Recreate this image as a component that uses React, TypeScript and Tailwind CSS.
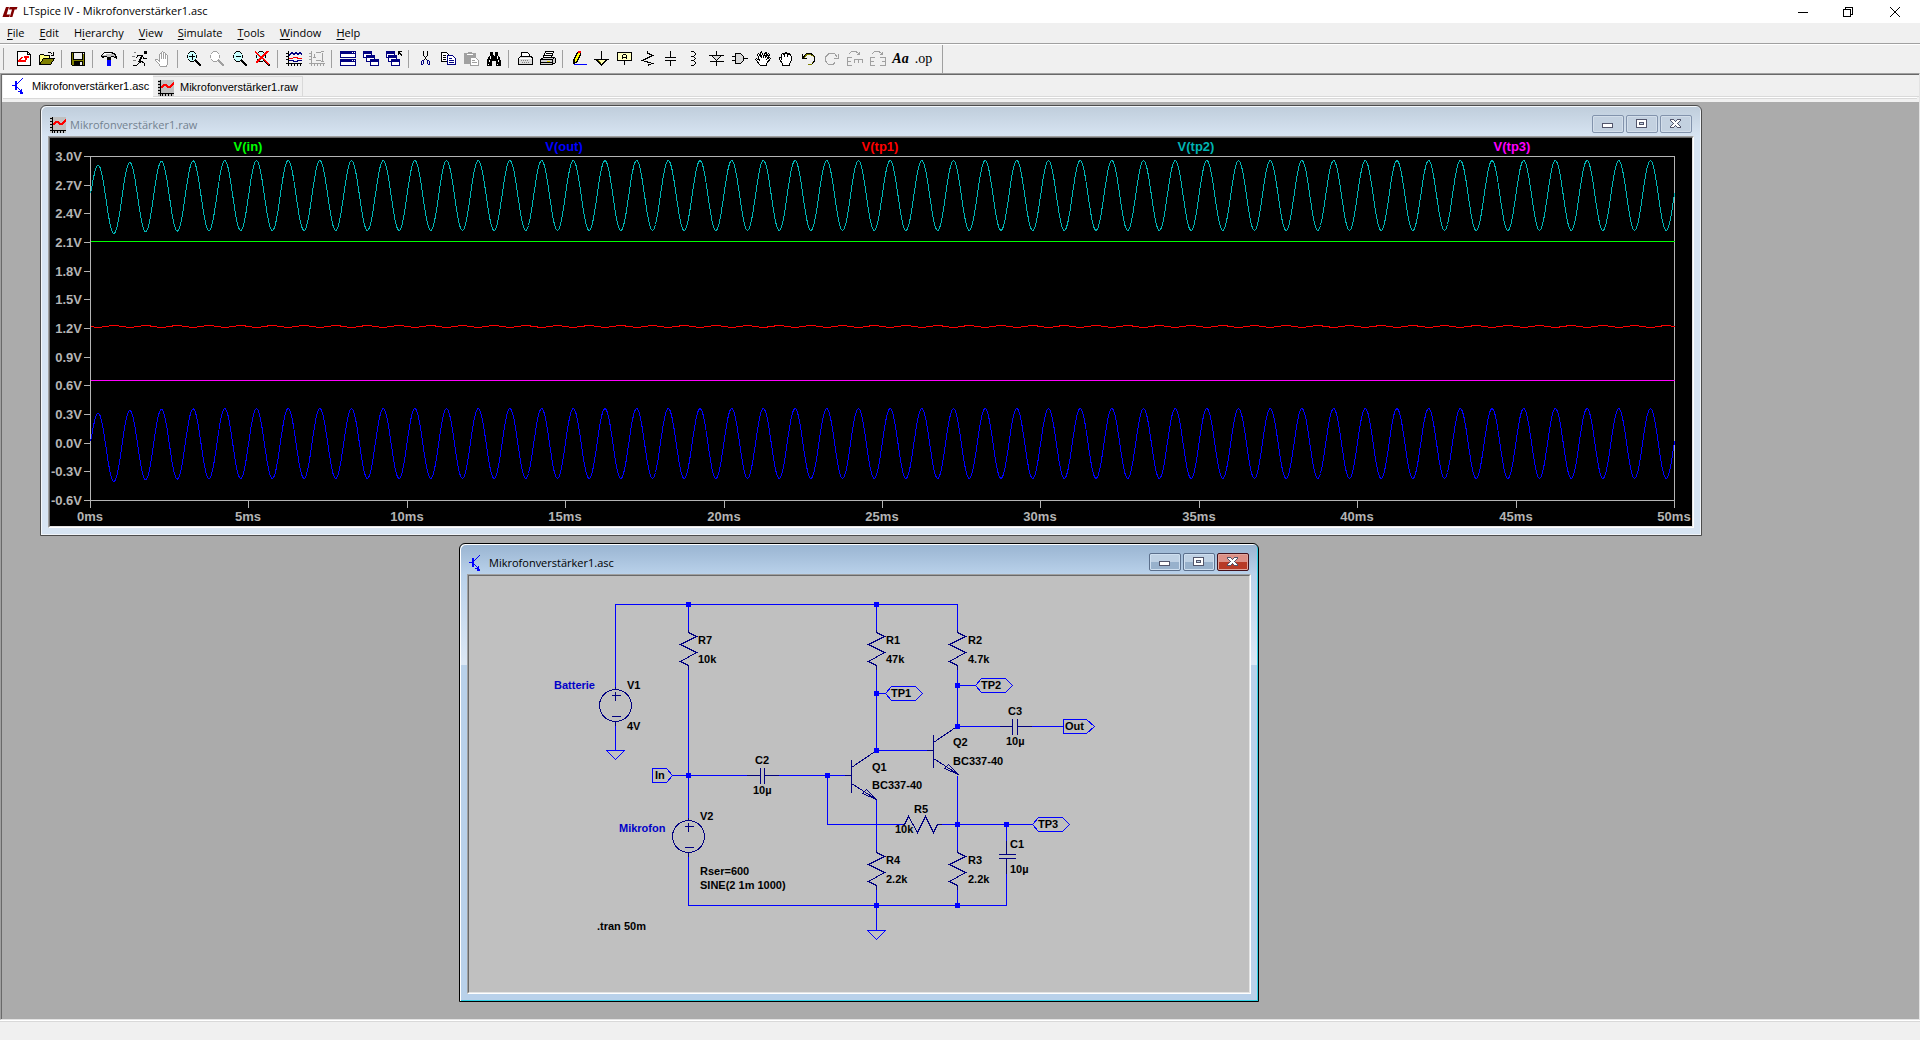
import type { ReactNode } from "react";
import clsx from "clsx";

const UI_FONT = "font-['Open_Sans','Noto_Sans',sans-serif]";
const SANS_FONT = "font-['Liberation_Sans',Arial,sans-serif]";

/* ---------- Icons ---------- */

function Icon({ children, size = 16 }: { children: ReactNode; size?: number }) {
  return (
    <svg width={size} height={size} viewBox="0 0 16 16" fill="none" stroke="#000" shapeRendering="crispEdges" className="shrink-0">
      {children}
    </svg>
  );
}

function LogoIcon() {
  return (
    <svg width="16" height="16" viewBox="0 0 16 16" fill="#800000" className="shrink-0">
      <path d="M4 3H7L4.6 10.5H8L7.3 13H0.5L1.3 10.5Z" />
      <path d="M7.6 3H15.5L14.6 5.6H12.6L10.4 13H7.8L10 5.6H7Z" />
    </svg>
  );
}

function TransistorIcon() {
  return (
    <Icon>
      <path d="M0 7.5H4M10.5 0.5L5 6M5 9L9 13" stroke="#0000ff" />
      <path d="M4 3V12" stroke="#0000ff" strokeWidth="2" />
      <path d="M6 13H9V11H10V14H11V16H8V14H6Z" fill="#0000ff" stroke="none" />
    </Icon>
  );
}

function WaveIcon() {
  return (
    <Icon>
      <rect width="16" height="16" fill="#c0c0c0" stroke="none" />
      <path d="M2.5 0V16M0 13.5H16M0 1.5H2M0 4.5H2M0 7.5H2M0 10.5H2M4.5 14V16M7.5 14V16M10.5 14V16M13.5 14V16" />
      <path d="M3 8L6 5H8L10 7H12L16 3" stroke="#ff0000" strokeWidth="1.6" />
    </Icon>
  );
}

const lens = "M4 0.5H8M9.5 2V3M10.5 4V7M9.5 8V9M8 10.5H4M2.5 9V8M1.5 7V4M2.5 3V2M3 1.5H4M8 1.5H9M3 9.5H4M8 9.5H9";

function Lens({ color = "#000", glass = "#c8ffff", children }: { color?: string; glass?: string; children?: ReactNode }) {
  return (
    <Icon>
      <path d="M4 1H8L10 4V7L8 10H4L2 7V4Z" fill={glass} stroke="none" />
      <path d={lens} stroke={color} />
      <path d="M9 9L15 15" stroke={color} strokeWidth="2" />
      {children}
    </Icon>
  );
}

function Window16({ x, y }: { x: number; y: number }) {
  return (
    <g>
      <rect x={x + 0.5} y={y + 0.5} width="8" height="6" fill="#fff" stroke="#000080" />
      <path d={`M${x} ${y + 1}h9v2h-9z`} fill="#000080" stroke="none" />
    </g>
  );
}

function Hand({ color }: { color: string }) {
  return (
    <Icon>
      <path
        d="M5.5 15.5L3.5 12.5L0.5 9.5V8.5H2.5L4.5 10.5V3.5L5.5 2.5L6.5 3.5V1.5L7.5 0.5L8.5 1.5V2.5L9.5 1.5L10.5 2.5V4.5L11.5 3.5L12.5 4.5V12.5L11.5 15.5ZM6.5 3.5V8M8.5 2.5V8M10.5 4.5V8"
        fill="#fff"
        stroke={color}
      />
    </Icon>
  );
}

const toolGroups: { label: string; icon: ReactNode }[][] = [
  [
    {
      label: "New schematic",
      icon: (
        <Icon>
          <path d="M1.5 0.5H11.5L14.5 3.5V14.5H1.5ZM11.5 0.5V3.5H14.5" fill="#fff" />
          <path d="M5 6H7L5 9H8V11H2V10ZM8 5H13V7H11L10 11H8L9 7H8Z" fill="#ff0000" stroke="none" />
        </Icon>
      ),
    },
    {
      label: "Open",
      icon: (
        <Icon>
          <path d="M0.5 13.5V4.5L1.5 3.5H4.5L5.5 4.5H10.5V7.5" fill="#ffff80" />
          <path d="M0.5 13.5L4.5 7.5H15.5L11.5 13.5Z" fill="#808000" />
          <path d="M8.5 2.5L9.5 1.5H11.5L13.5 3.5M14.5 1V4M12 4.5H15" />
        </Icon>
      ),
    },
  ],
  [
    {
      label: "Save",
      icon: (
        <Icon>
          <path d="M1.5 1.5H14.5V14.5H2.5L1.5 13.5Z" fill="#808000" />
          <path d="M4 2H12V8H4Z" fill="#efefef" stroke="none" />
          <path d="M4 10H13V15H4Z" fill="#000" stroke="none" />
          <path d="M10 11H12V14H10ZM13 2H14V3H13Z" fill="#efefef" stroke="none" />
          <path d="M3.5 2V8.5H12.5V2" />
        </Icon>
      ),
    },
  ],
  [
    {
      label: "Control panel",
      icon: (
        <Icon>
          <path d="M0.5 4.5L3.5 1.5H10.5L14.5 3.5L15.5 7.5L12.5 5.5H10.5L9.5 6.5H6.5L5.5 5.5H3.5L1.5 6.5Z" fill="#c0c0c0" />
          <path d="M3 2.5H10M2 3.5H5" stroke="#fff" />
          <path d="M6 7H10V15H6Z" fill="#0000ff" stroke="none" />
          <path d="M6 7H10V9H6Z" fill="#000" stroke="none" />
        </Icon>
      ),
    },
  ],
  [
    {
      label: "Run",
      icon: (
        <Icon>
          <path d="M12 0H15V3H12Z" fill="#000" stroke="none" />
          <path d="M6 4.5H10L12 7.5H15M6.5 4L4 7M8 11L5 14H1M9 10L12 12V15" />
          <path d="M10.5 4L7.5 10L9 11" strokeWidth="2" />
          <path d="M2 1.5H4M0 5.5H3M1 9.5H4" stroke="#808080" />
        </Icon>
      ),
    },
    { label: "Halt", icon: <Hand color="#a0a0a0" /> },
  ],
  [
    {
      label: "Zoom in",
      icon: (
        <Lens>
          <path d="M3 5.5H9M6.5 3V9" />
        </Lens>
      ),
    },
    { label: "Pan", icon: <Lens color="#a0a0a0" glass="#fff" /> },
    {
      label: "Zoom out",
      icon: (
        <Lens>
          <path d="M4 5.5H9" />
        </Lens>
      ),
    },
    {
      label: "Zoom full extents",
      icon: (
        <Lens>
          <path d="M0 1L14 13M13 0L1 12" stroke="#ff0000" strokeWidth="1.5" />
        </Lens>
      ),
    },
  ],
  [
    {
      label: "Autorange",
      icon: (
        <Icon>
          <path d="M2.5 0V15M0 12.5H16M0 2.5H2M0 5.5H2M0 8.5H2M5.5 13V15M8.5 13V15M11.5 13V15M14.5 13V15" />
          <path d="M3 4.5L6 1.5L8 3.5L10 1.5L12 3.5L14 1.5L16 3.5" stroke="#000080" />
          <path d="M3 7.5H6L8 6.5H11L12 7.5H16" stroke="#ff0000" />
          <path d="M3 9.5H7L8 10.5H11L12 9.5H16" stroke="#000080" />
        </Icon>
      ),
    },
    {
      label: "FFT",
      icon: (
        <Icon>
          <path d="M2.5 0V15M0 12.5H16M0 2.5H2M0 5.5H2M0 8.5H2M5.5 13V15M8.5 13V15M11.5 13V15M14.5 13V15M7 1.5H12M5.5 3V7M7 9.5H12M13.5 2V10M12 0.5H15M12 10.5H15M4 6.5H7" stroke="#a0a0a0" />
        </Icon>
      ),
    },
  ],
  [
    {
      label: "Tile windows",
      icon: (
        <Icon>
          <path d="M0.5 0.5H15.5V6.5H0.5ZM0.5 8.5H15.5V14.5H0.5Z" fill="#fff" stroke="#000080" />
          <path d="M0 0H16V3H0ZM0 8H16V11H0Z" fill="#000080" stroke="none" />
          <path d="M12 1.5H13M14 1.5H15M12 9.5H13M14 9.5H15" stroke="#fff" />
        </Icon>
      ),
    },
    {
      label: "Cascade windows",
      icon: (
        <Icon>
          <Window16 x={0} y={0} />
          <Window16 x={3} y={4} />
          <Window16 x={7} y={8} />
        </Icon>
      ),
    },
    {
      label: "Close all windows",
      icon: (
        <Icon>
          <Window16 x={0} y={0} />
          <Window16 x={2} y={4} />
          <Window16 x={5} y={8} />
          <path d="M12 0.5H16M12.5 0V4M13 1L16 5" />
        </Icon>
      ),
    },
  ],
  [
    {
      label: "Cut",
      icon: (
        <Icon>
          <path d="M6.5 0V4L10.5 10M10.5 0V4L6.5 10" />
          <path d="M5.5 9.5H6.5V12.5L5.5 13.5H4.5V10.5ZM10.5 9.5H11.5L12.5 10.5V13.5H11.5L10.5 12.5Z" stroke="#000080" />
        </Icon>
      ),
    },
    {
      label: "Copy",
      icon: (
        <Icon>
          <path d="M1.5 1.5H6.5L9.5 4.5V10.5H1.5Z" fill="#fff" />
          <path d="M7.5 4.5H12.5L15.5 7.5V13.5H7.5Z" fill="#fff" stroke="#000080" />
          <path d="M3 4.5H6M3 6.5H6M3 8.5H6" />
          <path d="M9 7.5H12M9 9.5H14M9 11.5H14" stroke="#000080" />
        </Icon>
      ),
    },
    {
      label: "Paste",
      icon: (
        <Icon>
          <path d="M1 2H5V1H9V2H13V13H1Z" fill="#a0a0a0" stroke="none" />
          <path d="M4 3.5H10" stroke="#fff" />
          <path d="M7.5 6.5H12.5L15.5 9.5V14.5H7.5Z" fill="#fff" stroke="#a0a0a0" />
          <path d="M9 9.5H12M9 11.5H14" stroke="#a0a0a0" />
        </Icon>
      ),
    },
    {
      label: "Find",
      icon: (
        <Icon>
          <path d="M4 1H7V4L8 5L9 4V1H12V4L14 7L15 10V15H10V10H6V15H1V10L2 7L4 4Z" fill="#000" stroke="none" />
          <path d="M4.5 5V8M3.5 9V11M11.5 5V8M12.5 9V11M2 13.5H3M11 13.5H12" stroke="#fff" />
        </Icon>
      ),
    },
  ],
  [
    {
      label: "Print setup",
      icon: (
        <Icon>
          <path d="M4.5 5V1.5H10.5L12.5 3.5V5" fill="#fff" />
          <path d="M3.5 5.5H14.5L15.5 7.5V13.5H1.5V7.5Z" fill="#dcdcdc" />
          <path d="M2 7.5H15" stroke="#fff" />
          <path d="M4 9.5H12M5 11.5H13" stroke="#808080" strokeDasharray="1 1" />
        </Icon>
      ),
    },
    {
      label: "Print",
      icon: (
        <Icon>
          <path d="M3.5 6L5.5 0.5H13.5L11.5 6" fill="#fff" />
          <path d="M0.5 8.5L3.5 6.5H14.5L15.5 7.5V11.5L12.5 13.5H0.5Z" fill="#d0d0d0" />
          <path d="M6 2.5H12M5 4.5H11M1 8.5H12.5V13M12.5 8.5L14.5 6.5M1 11.5H12" />
          <path d="M7 10.5H10" stroke="#e0d000" />
        </Icon>
      ),
    },
  ],
  [
    {
      label: "Wire",
      icon: (
        <Icon>
          <path d="M2.5 12.5V9.5L6.5 1.5H9.5V3.5L5.5 11.5Z" fill="#ffff00" />
          <path d="M7 0H10V2H7Z" fill="#ff0000" stroke="none" />
          <path d="M2 9H4V11H5V12L2 13Z" fill="#000" stroke="none" />
          <path d="M3 13.5H16" stroke="#0000ff" />
        </Icon>
      ),
    },
    {
      label: "Ground",
      icon: (
        <Icon>
          <path d="M3 8H13L8 14Z" fill="#ffffb0" stroke="#808000" />
          <path d="M7.5 0V8M0 8.5H15M2 8.5L7.5 14L13 8.5" />
        </Icon>
      ),
    },
    {
      label: "Label net",
      icon: (
        <Icon>
          <path d="M0.5 1.5H14.5V9.5H0.5Z" fill="#ffffc0" />
          <path d="M7.5 10V14M5.5 8V4.5L6.5 3.5H8.5L9.5 4.5V8M6 6.5H9" />
        </Icon>
      ),
    },
    { label: "Resistor", icon: <Icon><path d="M7.5 0V2L12.5 4.5L2.5 9.5L12.5 12.5L8.5 14V15" /></Icon> },
    { label: "Capacitor", icon: <Icon><path d="M7.5 0V6M7.5 9V15M2 6.5H13M2 9.5H13" /></Icon> },
    { label: "Inductor", icon: <Icon><path d="M5 0.5H7.5L9.5 2.5V3.5L7.5 5.5H5M7.5 5.5L9.5 7.5L7.5 9.5H5M7.5 9.5L9.5 11.5V12.5L7.5 14.5H5" /></Icon> },
    {
      label: "Diode",
      icon: (
        <Icon>
          <path d="M2.5 4.5H12.5L7.5 9.5Z" fill="#d8d8d8" />
          <path d="M7.5 0V4M7.5 10V15M0 4.5H15M1 10.5H15" />
        </Icon>
      ),
    },
    {
      label: "Component",
      icon: (
        <Icon>
          <path d="M3.5 2.5H8.5L11.5 5.5V9.5L8.5 12.5H3.5Z" fill="#d8d8d8" />
          <path d="M0 5.5H3M0 9.5H3M12 7.5H16" />
        </Icon>
      ),
    },
    {
      label: "Move",
      icon: (
        <Icon>
          <path d="M5.5 14.5L0.5 8.5L1.5 7.5L4.5 9.5L2.5 3.5L3.5 2.5L6.5 6.5L5.5 1.5L6.5 0.5L8.5 5.5L10.5 1.5H11.5L10.5 6.5L13.5 2.5L14.5 3.5L12.5 7.5L14.5 6.5L15.5 7.5L11.5 12.5V14.5Z" fill="#fff" />
        </Icon>
      ),
    },
    {
      label: "Drag",
      icon: (
        <Icon>
          <path d="M4.5 14.5V12.5L1.5 8.5V6.5H3.5V3.5L4.5 2.5L6.5 3.5V2.5L8.5 1.5L9.5 3.5L11.5 2.5L12.5 4.5L13.5 5.5V9.5L11.5 12.5V14.5ZM6.5 4V6M9.5 4V6M3.5 7V9" fill="#fff" />
        </Icon>
      ),
    },
    {
      label: "Undo",
      icon: (
        <Icon>
          <path d="M3 6.5L6 3.5H10L13.5 6.5V9.5L10.5 13.5H7" stroke="#808000" />
          <path d="M1.5 3V8M1 7.5H6M2 6.5L5.5 2.5H10L13.5 5.5V10L10.5 13.5" />
        </Icon>
      ),
    },
    {
      label: "Redo",
      icon: (
        <Icon>
          <path d="M14.5 3V7.5H10M13 6L10.5 2.5H5L1.5 6V10L4.5 13.5H9L11 11.5" stroke="#a0a0a0" />
        </Icon>
      ),
    },
    {
      label: "Rotate",
      icon: (
        <Icon>
          <path d="M2 2.5L5 0.5H9L12.5 3.5M12.5 1V4M10 3.5H13M5 6.5H0.5V14.5H5M1 10.5H4M7.5 12V8.5H15.5V12M11.5 9V12" stroke="#a0a0a0" />
        </Icon>
      ),
    },
    {
      label: "Mirror",
      icon: (
        <Icon>
          <path d="M2 2.5L5 0.5H9L12.5 3.5M12.5 1V4M10 3.5H13M5 6.5H0.5V14.5H5M1 10.5H4M10 6.5H15.5V14.5H10M12 10.5H15" stroke="#a0a0a0" />
        </Icon>
      ),
    },
    { label: "Text", icon: <span className="font-['Liberation_Serif',serif] text-sm font-bold italic">Aa</span> },
    { label: "SPICE directive", icon: <span className="font-['Liberation_Serif',serif] text-sm">.op</span> },
  ],
];

/* ---------- Application bars ---------- */

function TitleBar() {
  return (
    <header className="flex h-[23px] items-center gap-[5px] bg-white pl-0.5">
      <LogoIcon />
      <h1 className={clsx(UI_FONT, "text-[11px]")}>LTspice IV - Mikrofonverstärker1.asc</h1>
      <div className="ml-auto flex">
        <button type="button" aria-label="Minimize" className="grid h-5 w-[45px] place-items-center">
          <svg width="10" height="10" viewBox="0 0 10 10" stroke="#000" shapeRendering="crispEdges">
            <path d="M0 5.5H10" />
          </svg>
        </button>
        <button type="button" aria-label="Restore" className="grid h-5 w-[45px] place-items-center">
          <svg width="10" height="10" viewBox="0 0 10 10" fill="none" stroke="#000" shapeRendering="crispEdges">
            <path d="M0.5 2.5H7.5V9.5H0.5ZM2.5 2V0.5H9.5V7.5H8" />
          </svg>
        </button>
        <button type="button" aria-label="Close" className="grid h-5 w-[50px] place-items-center">
          <svg width="10" height="10" viewBox="0 0 10 10" stroke="#000">
            <path d="M0 0L10 10M10 0L0 10" />
          </svg>
        </button>
      </div>
    </header>
  );
}

const menuItems = [
  ["", "F", "ile"],
  ["", "E", "dit"],
  ["H", "i", "erarchy"],
  ["", "V", "iew"],
  ["", "S", "imulate"],
  ["", "T", "ools"],
  ["", "W", "indow"],
  ["", "H", "elp"],
];

function MenuBar() {
  return (
    <nav className={clsx(UI_FONT, "flex h-[21px] items-center gap-[15px] border-b border-[#a0a0a0] bg-[#f0f0f0] pl-[7px] text-[11px]")}>
      {menuItems.map(([before, key, after]) => (
        <button type="button" key={key + after}>
          {before}
          <span className="underline underline-offset-2">{key}</span>
          {after}
        </button>
      ))}
    </nav>
  );
}

function Toolbar() {
  return (
    <div className="flex h-[29px] border-t border-white bg-[#f0f0f0]">
      <div className="flex items-center border-r border-[#a0a0a0] pr-[7px] pl-[3px]">
        <span className="mr-2 h-[22px] w-px bg-[#a0a0a0]" />
        {toolGroups.map((group, i) => (
          <div key={i} className="flex items-center">
            {i > 0 && <span className="mr-1 ml-[3px] h-[18px] w-px bg-[#a0a0a0]" />}
            {group.map((tool) => (
              <button type="button" key={tool.label} aria-label={tool.label} className="grid h-[22px] w-[23px] place-items-center">
                {tool.icon}
              </button>
            ))}
          </div>
        ))}
      </div>
    </div>
  );
}

function Tabs() {
  return (
    <div className="h-[27px] bg-[#f0f0f0] pl-px">
      <div className={clsx(SANS_FONT, "flex h-[22px] items-end border-b border-[#d9d9d9] text-[11px]")}>
        <button type="button" className="-mb-px flex h-[22px] w-[150px] items-center gap-1 bg-white pl-[9px]">
          <TransistorIcon />
          Mikrofonverstärker1.asc
        </button>
        <button type="button" className="flex h-5 items-center gap-1.5 border-t border-r border-[#d9d9d9] pt-0.5 pr-1 pl-[5px]">
          <WaveIcon />
          Mikrofonverstärker1.raw
        </button>
      </div>
      <div className="mr-0.5 h-0.5 border-b border-[#d9d9d9] bg-white" />
    </div>
  );
}

/* ---------- MDI child windows ---------- */

function CaptionButton({ label, active, danger, children }: { label: string; active: boolean; danger?: boolean; children: ReactNode }) {
  return (
    <button
      type="button"
      aria-label={label}
      className={clsx(
        "grid h-[18px] w-8 place-items-center rounded-xs border",
        !active && "border-[#8293ac] bg-[#c3d1e0] inset-ring inset-ring-[#d3deea]",
        active && !danger && "border-[#5b6f8c] bg-linear-to-b from-[#bfd1e4] from-50% to-[#98b1cc] to-50% inset-ring inset-ring-[#cfdff0]",
        active && danger && "border-[#43101a] bg-linear-to-b from-[#dd9086] from-50% to-[#b83a26] to-50% inset-ring inset-ring-[#e0a59c]",
      )}
    >
      <svg width="12" height="10" viewBox="0 0 12 10" fill="#fff" stroke="#52556b" shapeRendering="crispEdges">
        {children}
      </svg>
    </button>
  );
}

function ChildWindow({ title, icon, active = false, className, children }: { title: string; icon: ReactNode; active?: boolean; className: string; children: ReactNode }) {
  return (
    <section
      className={clsx(
        "absolute flex flex-col rounded-t-md border px-[7px] pb-[7px]",
        active
          ? "border-black bg-[linear-gradient(#99b4d1_0,#b9d1ea_30px,#dde8f5_121px,#b9d1ea_121px)] shadow-[inset_1px_1px_#fff,inset_-1px_-1px_#2fd0e4]"
          : "border-[#4c4c4c] bg-[linear-gradient(#bfcddb_0,#d7e4f2_30px)] shadow-[inset_1px_1px_#f4f8fc,inset_-1px_-1px_#f0f4f9]",
        className,
      )}
    >
      <div className="flex h-[30px] shrink-0 items-center gap-1 pt-2 pr-0.5 pl-0.5">
        {icon}
        <h2 className={clsx(UI_FONT, "text-[11px]", active ? "text-black" : "text-[#738290]")}>{title}</h2>
        <div className="mb-0.5 ml-auto flex gap-0.5">
          <CaptionButton label="Minimize" active={active}>
            <path d="M0.5 4.5H10.5V8.5H0.5Z" />
          </CaptionButton>
          <CaptionButton label="Maximize" active={active}>
            <path d="M0.5 0.5H10.5V8.5H0.5ZM3.5 3.5H7.5V5.5H3.5Z" fillRule="evenodd" />
          </CaptionButton>
          <CaptionButton label="Close" active={active} danger>
            <path d="M0.5 0.5H3.5L5.5 2.5L7.5 0.5H10.5V1.5L7.5 4.5L10.5 7.5V8.5H7.5L5.5 6.5L3.5 8.5H0.5V7.5L3.5 4.5L0.5 1.5Z" />
          </CaptionButton>
        </div>
      </div>
      <div className="flex min-h-0 flex-1 border border-t-[#a0a0a0] border-r-white border-b-white border-l-[#a0a0a0]">
        <div className="min-w-0 flex-1 border border-t-[#696969] border-r-[#e3e3e3] border-b-[#e3e3e3] border-l-[#696969]">{children}</div>
      </div>
    </section>
  );
}

/* ---------- Waveform plot ---------- */

const PLOT = { left: 90, right: 1674, top: 156, bottom: 500 };
const PX_PER_MS = (PLOT.right - PLOT.left) / 50;

const traces = [
  { name: "V(in)", color: "#00ff00" },
  { name: "V(out)", color: "#0000ff" },
  { name: "V(tp1)", color: "#ff0000" },
  { name: "V(tp2)", color: "#00b4b4" },
  { name: "V(tp3)", color: "#ff00ff" },
];

const voltLabels = ["3.0V", "2.7V", "2.4V", "2.1V", "1.8V", "1.5V", "1.2V", "0.9V", "0.6V", "0.3V", "0.0V", "-0.3V", "-0.6V"];

// 1 kHz sine with a start-up offset that settles within a few milliseconds
function sine(center: number, amplitude: number, settle: number) {
  const points: string[] = [];
  for (let x = 0; x <= PLOT.right - PLOT.left; x++) {
    const ms = x / PX_PER_MS;
    const offset = settle * Math.exp(-ms / 1.1) * (1 - Math.exp(-ms / 0.08));
    const y = center - amplitude * Math.sin(2 * Math.PI * (ms + 0.01)) + offset;
    points.push(`${PLOT.left + x},${y.toFixed(1)}`);
  }
  return points.join(" ");
}

function Plot() {
  const { left, right, top, bottom } = PLOT;
  return (
    <svg viewBox="50 138 1642 388" className="block size-full bg-black" shapeRendering="crispEdges">
      <g className={SANS_FONT} fontSize="13" fontWeight="bold" textAnchor="middle">
        {traces.map((trace, i) => (
          <text key={trace.name} x={248 + i * 316} y="151" fill={trace.color}>
            {trace.name}
          </text>
        ))}
        {voltLabels.map((label, i) => (
          <text key={label} x="82" y={161 + Math.round((i * (bottom - top)) / 12)} fill="#b4b4b4" textAnchor="end">
            {label}
          </text>
        ))}
        {Array.from({ length: 11 }, (_, i) => (
          <text key={i} x={Math.round(left + i * 5 * PX_PER_MS)} y="521" fill="#b4b4b4">
            {i * 5}ms
          </text>
        ))}
      </g>
      <g transform="translate(0.5 0.5)" fill="none">
        <path d={`M${left} ${top}H${right}V${bottom}H${left}Z`} stroke="#b4b4b4" />
        {voltLabels.map((label, i) => {
          const y = top + Math.round((i * (bottom - top)) / 12);
          return <path key={label} d={`M83 ${y}H${left}`} stroke="#b4b4b4" />;
        })}
        {Array.from({ length: 11 }, (_, i) => (
          <path key={i} d={`M${Math.round(left + i * 5 * PX_PER_MS)} ${bottom}V507`} stroke="#b4b4b4" />
        ))}
        <path d={`M${left} 241H${right}`} stroke="#00ff00" />
        <polyline points={sine(326, -0.8, 0)} stroke="#ff0000" />
        <path d={`M${left} 380H${right}`} stroke="#ff00ff" />
        <polyline points={sine(195, 35, 6)} stroke="#00b4b4" />
        <polyline points={sine(443, 35, 6)} stroke="#0000ff" />
      </g>
    </svg>
  );
}

/* ---------- Schematic ---------- */

const WIRE = "#0000ff";
const PART = "#000080";

function Resistor({ x, y }: { x: number; y: number }) {
  return <path d={`M${x} ${y - 3}v3l8 4l-16 8l16 8l-16 9l8 4v4`} stroke={PART} />;
}

function Source({ x, y }: { x: number; y: number }) {
  return (
    <g stroke={PART}>
      <circle cx={x} cy={y} r="16" />
      <path d={`M${x} ${y - 19}v3M${x} ${y + 16}v4M${x - 4} ${y - 10}h9M${x} ${y - 14}v9M${x - 4} ${y + 11}h9`} />
    </g>
  );
}

function Transistor({ x, y }: { x: number; y: number }) {
  return <path d={`M${x - 7} ${y}h7M${x} ${y - 16}v33M${x} ${y - 8}l25 -17M${x} ${y + 8}l25 16l-10 -10l-4 4l14 6`} stroke={PART} />;
}

function Ground({ x, y }: { x: number; y: number }) {
  return <path d={`M${x - 9} ${y}h18l-9 9z`} stroke={WIRE} />;
}

function TestPoint({ x, y }: { x: number; y: number }) {
  return <path d={`M${x} ${y}l6 -7h24l7 7l-7 7h-24z`} stroke={WIRE} />;
}

const nodes = [
  [688, 604], [876, 604], [876, 693], [957, 685], [957, 726], [876, 750], [688, 775],
  [827, 775], [957, 824], [1006, 824], [876, 905], [957, 905],
];

const partLabels: [number, number, string][] = [
  [698, 644, "R7"], [698, 663, "10k"],
  [886, 644, "R1"], [886, 663, "47k"],
  [968, 644, "R2"], [968, 663, "4.7k"],
  [627, 689, "V1"], [627, 730, "4V"],
  [755, 764, "C2"], [753, 794, "10µ"],
  [1008, 715, "C3"], [1006, 745, "10µ"],
  [872, 771, "Q1"], [872, 789, "BC337-40"],
  [953, 746, "Q2"], [953, 765, "BC337-40"],
  [914, 813, "R5"], [895, 833, "10k"],
  [886, 864, "R4"], [886, 883, "2.2k"],
  [968, 864, "R3"], [968, 883, "2.2k"],
  [1010, 848, "C1"], [1010, 873, "10µ"],
  [700, 820, "V2"], [700, 875, "Rser=600"], [700, 889, "SINE(2 1m 1000)"],
  [655, 779, "In"], [1065, 730, "Out"],
  [891, 697, "TP1"], [981, 689, "TP2"], [1038, 828, "TP3"],
  [597, 930, ".tran 50m"],
];

function Schematic() {
  return (
    <svg viewBox="469 576 780 416" className="block size-full bg-[#c0c0c0]" shapeRendering="crispEdges">
      <g transform="translate(0.5 0.5)" fill="none">
        <g stroke={WIRE}>
          <path d="M615 686V604H957V629M688 604V629M876 604V629M688 669V817M876 669V750H926M957 669V726H999" />
          <path d="M615 725V750M672 775H746M778 775H844M827 775V824H902M876 693H885M957 685H975M1031 726H1063" />
          <path d="M876 799V849M957 775V849M941 824H1032M1006 824V840M1006 873V905H688V856M876 889V930M957 889V905" />
          <path d="M652 768H666L672 775L666 782H652ZM1063 719H1086L1094 726L1086 733H1063Z" />
        </g>
        <Resistor x={688} y={632} />
        <Resistor x={876} y={632} />
        <Resistor x={957} y={632} />
        <Resistor x={876} y={852} />
        <Resistor x={957} y={852} />
        <path d="M902 824H904L908 816L917 832L925 816L933 832L937 824H941" stroke={PART} />
        <path d="M746 775H760M760 767V783M764 767V783M764 775H778" stroke={PART} />
        <path d="M999 726H1012M1012 718V734M1017 718V734M1017 726H1031" stroke={PART} />
        <path d="M1006 840V854M998 854H1015M998 858H1015M1006 858V873" stroke={PART} />
        <Source x={615} y={705} />
        <Source x={688} y={836} />
        <Transistor x={851} y={775} />
        <Transistor x={933} y={750} />
        <Ground x={615} y={750} />
        <Ground x={876} y={930} />
        <TestPoint x={885} y={693} />
        <TestPoint x={975} y={685} />
        <TestPoint x={1032} y={824} />
      </g>
      {nodes.map(([x, y]) => (
        <rect key={`${x}-${y}`} x={x - 2} y={y - 2} width="5" height="5" fill={WIRE} />
      ))}
      <g className={SANS_FONT} fontSize="11" fontWeight="bold">
        {partLabels.map(([x, y, label]) => (
          <text key={`${x}-${y}`} x={x} y={y}>
            {label}
          </text>
        ))}
        <text x="554" y="689" fill="#0000c8">Batterie</text>
        <text x="619" y="832" fill="#0000c8">Mikrofon</text>
      </g>
    </svg>
  );
}

export default function App() {
  return (
    <div className="flex h-screen flex-col overflow-hidden bg-white pb-5 text-black">
      <TitleBar />
      <MenuBar />
      <Toolbar />
      <main className="flex min-h-0 flex-1 flex-col border border-t-[#a0a0a0] border-r-[#e3e3e3] border-b-[#e3e3e3] border-l-[#a0a0a0]">
        <div className="flex min-h-0 flex-1 flex-col border-t border-l border-[#696969]">
          <Tabs />
          <div className="relative flex-1 overflow-hidden bg-[#ababab]">
            <ChildWindow title="Mikrofonverstärker1.raw" icon={<WaveIcon />} className="top-[3px] left-[38px] h-[431px] w-[1662px]">
              <Plot />
            </ChildWindow>
            <ChildWindow title="Mikrofonverstärker1.asc" icon={<TransistorIcon />} active className="top-[441px] left-[457px] h-[459px] w-[800px]">
              <Schematic />
            </ChildWindow>
          </div>
        </div>
      </main>
      <footer className="h-5 border-t border-white bg-[#f0f0f0] shadow-[inset_0_1px_#d9d9d9]" />
    </div>
  );
}
